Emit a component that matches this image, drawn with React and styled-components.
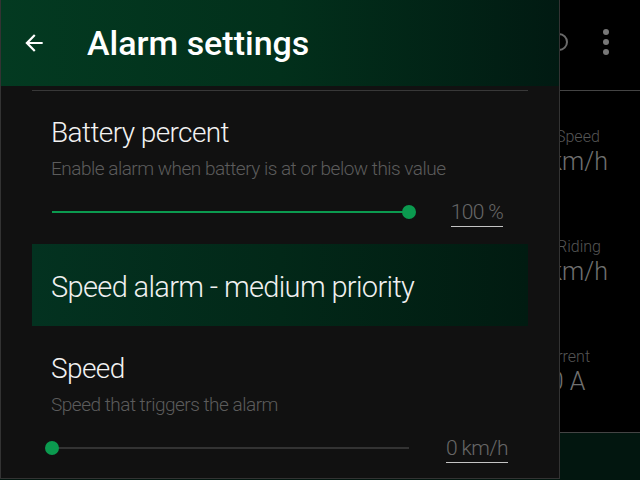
import React from "react";
import styled, { createGlobalStyle } from "styled-components";

const Global = createGlobalStyle`
  html, body {
    margin: 0;
    padding: 0;
    background: #000;
  }
  body {
    width: 640px;
    height: 480px;
    overflow: hidden;
    font-family: Roboto, "Liberation Sans", sans-serif;
  }
`;

const Screen = styled.div`
  position: relative;
  width: 640px;
  height: 480px;
  background: #000;
  overflow: hidden;
  display: flex;
  flex-direction: column;
`;

// the page behind the drawer
const PageBar = styled.div`
  height: 91px;
  box-sizing: border-box;
  border-bottom: 1px solid #444;
  display: flex;
  align-items: center;
  justify-content: flex-end;
  gap: 35px;
  padding: 0 31px 7px 0;
  flex-shrink: 0;
`;

const Ring = styled.div`
  width: 14px;
  height: 14px;
  border: 2px solid #6a6a6a;
  border-radius: 50%;
`;

const Kebab = styled.div`
  display: flex;
  flex-direction: column;
  gap: 4px;
  span {
    width: 6px;
    height: 6px;
    border-radius: 50%;
    background: #777;
  }
`;

const Stats = styled.div`
  flex: 1;
  min-height: 0;
  display: flex;
  flex-direction: column;
  padding-left: 500px;
  padding-top: 36px;
`;

const Stat = styled.div`
  height: 110px;
  flex-shrink: 0;
  white-space: nowrap;
  font-weight: 300;
`;

const StatLabel = styled.div`
  font-size: 16px;
  line-height: 20px;
  color: #555;
  padding-left: ${(p) => p.$indent}px;
`;

const StatValue = styled.div`
  font-size: 25px;
  line-height: 30px;
  color: #707070;
  padding-left: ${(p) => p.$indent}px;
`;

const PageNav = styled.div`
  position: relative;
  height: 47px;
  border-top: 1px solid #444;
  background: #02160f;
  flex-shrink: 0;
`;

// drawer over the page
const Drawer = styled.div`
  position: absolute;
  left: 0;
  top: 0;
  width: 560px;
  height: 479px;
  box-sizing: border-box;
  background: #111;
  border: 1px solid #333;
  border-top: none;
  display: flex;
  flex-direction: column;
  overflow: hidden;
`;

const Header = styled.div`
  height: 86px;
  margin: 0 -1px;
  flex-shrink: 0;
  display: flex;
  align-items: center;
  background: linear-gradient(90deg, #033a21 0%, #02301b 50%, #011a12 100%);
  color: #fff;
`;

const Back = styled.button`
  background: none;
  border: none;
  padding: 0;
  margin: 0 0 0 21px;
  width: 26px;
  height: 26px;
  display: flex;
  cursor: pointer;
`;

const Title = styled.h1`
  margin: 0 0 0 40px;
  font-size: 34px;
  font-weight: 500;
  line-height: 36px;
`;

const Divider = styled.div`
  height: 1px;
  background: #383838;
  margin: 4px 31px 0 31px;
  flex-shrink: 0;
`;

const Setting = styled.div`
  padding: ${(p) => p.$top}px 0 0 50px;
  font-weight: 300;
`;

const Name = styled.div`
  font-size: 28px;
  line-height: 32px;
  color: #f2f2f2;
  letter-spacing: -0.6px;
`;

const Hint = styled.div`
  margin-top: 8px;
  font-size: 19px;
  line-height: 24px;
  color: #5c5c5c;
  letter-spacing: -0.5px;
`;

const SliderRow = styled.div`
  margin-top: 15px;
  height: 32px;
  display: flex;
  align-items: center;
`;

const Track = styled.div`
  position: relative;
  margin-left: 1px;
  width: 357px;
  height: 2px;
  background: #333;
`;

const Fill = styled.div`
  height: 100%;
  background: #0b9a4f;
`;

const Thumb = styled.div`
  position: absolute;
  top: 50%;
  width: 14px;
  height: 14px;
  margin: -7px 0 0 -7px;
  border-radius: 50%;
  background: #0b9a4f;
`;

const ValueBox = styled.div`
  width: 100px;
  margin-left: 18px;
  display: flex;
  justify-content: center;
`;

const Value = styled.span`
  font-size: 21px;
  line-height: 24px;
  font-weight: 300;
  color: #676767;
  padding: 3px 0 2px;
  border-bottom: 1px solid #c4c4c4;
  letter-spacing: -0.6px;
`;

const Section = styled.div`
  margin: 16px 31px 0 31px;
  height: 82px;
  flex-shrink: 0;
  display: flex;
  align-items: center;
  padding-left: 19px;
  background: linear-gradient(90deg, #033220 0%, #022818 50%, #011b11 100%);
  font-size: 29px;
  font-weight: 300;
  line-height: 32px;
  color: #f0f0f0;
  letter-spacing: -0.65px;
  padding-top: 4px;
  box-sizing: border-box;
`;

function Slider({ value }) {
  const pct = value * 100;
  return (
    <Track>
      <Fill style={{ width: `${pct}%` }} />
      <Thumb style={{ left: `${pct}%` }} />
    </Track>
  );
}

function SettingItem({ top, name, hint, value, unit }) {
  return (
    <Setting $top={top}>
      <Name>{name}</Name>
      <Hint>{hint}</Hint>
      <SliderRow>
        <Slider value={value} />
        <ValueBox>
          <Value>{unit}</Value>
        </ValueBox>
      </SliderRow>
    </Setting>
  );
}

export default function App() {
  return (
    <>
      <Global />
      <Screen>
        <PageBar>
          <Ring />
          <Kebab>
            <span />
            <span />
            <span />
          </Kebab>
        </PageBar>
        <Stats>
          <Stat>
            <StatLabel $indent={56}>Speed</StatLabel>
            <StatValue $indent={10}>0.0 km/h</StatValue>
          </Stat>
          <Stat>
            <StatLabel $indent={57}>Riding</StatLabel>
            <StatValue $indent={10}>0.0 km/h</StatValue>
          </Stat>
          <Stat>
            <StatLabel $indent={38}>Current</StatLabel>
            <StatValue $indent={30}>0.0 A</StatValue>
          </Stat>
        </Stats>
        <PageNav />

        <Drawer>
          <Header>
            <Back aria-label="Back">
              <svg width="26" height="26" viewBox="0 0 24 24" fill="none">
                <path
                  d="M20 11H7.83l5.59-5.59L12 4l-8 8 8 8 1.41-1.41L7.83 13H20v-2z"
                  fill="#fff"
                />
              </svg>
            </Back>
            <Title>Alarm settings</Title>
          </Header>
          <Divider />
          <SettingItem
            top={26}
            name="Battery percent"
            hint="Enable alarm when battery is at or below this value"
            value={1}
            unit="100 %"
          />
          <Section>Speed alarm - medium priority</Section>
          <SettingItem
            top={27}
            name="Speed"
            hint="Speed that triggers the alarm"
            value={0}
            unit="0 km/h"
          />
        </Drawer>
      </Screen>
    </>
  );
}
